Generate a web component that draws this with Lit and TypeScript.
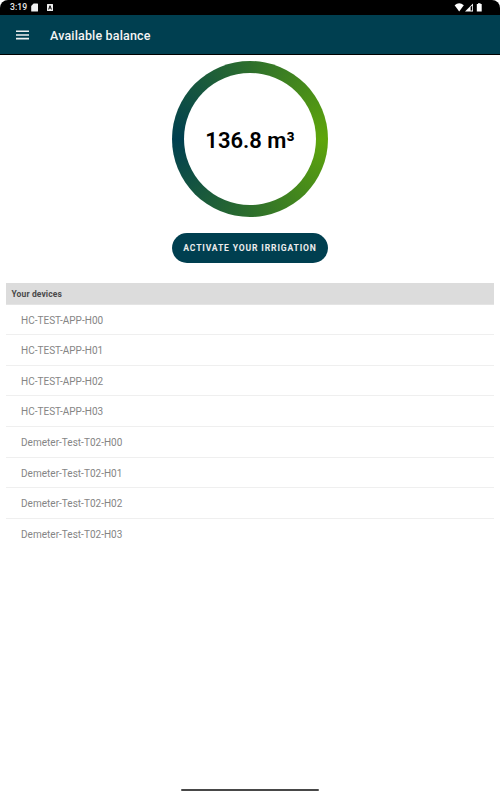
import { LitElement, html, css } from "lit";
import { customElement, property } from "lit/decorators.js";

@customElement("status-bar")
class StatusBar extends LitElement {
  static styles = css`
    :host { display: flex; box-sizing: border-box; height: 15px; flex: none; align-items: center;
      background: #000; color: #e8e8e8; border-radius: 8px 8px 0 0; padding: 0 17px 0 10px; }
    .time { font: 500 8.6px/15px Roboto, sans-serif; width: 21px; letter-spacing: 0.05px; }
    svg { display: block; fill: #f0f0f0; }
    .app { margin-left: 8px; }
    .right { margin-left: auto; fill: #fff; }
  `;
  render() {
    return html`
      <span class="time">3:19</span>
      <svg width="8" height="15" viewBox="0 0 8 15"><path d="M2.6 3.4H6.4Q7 3.4 7 4V10.9Q7 11.5 6.4 11.5H.8Q.2 11.5.2 10.9V6Z" /></svg>
      <svg class="app" width="7" height="15" viewBox="0 0 7 15"><path fill-rule="evenodd" d="M.5 4H5.5Q6 4 6 4.5V10.5Q6 11 5.5 11H.5Q0 11 0 10.5V4.5Q0 4 .5 4ZM2.5 5.4 1.2 9.4H2.1L2.4 8.5H3.7L4 9.4H4.9L3.5 5.4ZM3 6.4 3.4 7.8H2.7Z" /></svg>
      <svg class="right" width="29" height="15" viewBox="0 0 29 15">
        <path d="M.6 5.3Q5.2 1.3 9.8 5.3L5.2 11.4Z" />
        <path fill-rule="evenodd" d="M19 3.4V11.5H11ZM16.6 7V10.6H18.2V5.5Z" />
        <path d="M22.8 4.1H24V3.2H26.5V4.1H27.7V11.6H22.8Z" />
      </svg>
    `;
  }
}

@customElement("balance-ring")
class BalanceRing extends LitElement {
  @property() value = "";
  static styles = css`
    :host { display: grid; box-sizing: border-box; width: 156px; height: 156px; padding: 12px; border-radius: 50%;
      background: conic-gradient(from 270deg, #003f50, #2d6e2c 25%, #5ea50b 50%, #2d6e2c 75%, #003f50); }
    .inner { display: grid; place-items: center; box-sizing: border-box; padding-top: 3px; border-radius: 50%; background: #fff;
      font: 600 22px/26px Roboto, sans-serif; color: #000; white-space: nowrap; }
  `;
  render() {
    return html`<div class="inner">${this.value}</div>`;
  }
}

@customElement("device-list")
class DeviceList extends LitElement {
  @property({ attribute: false }) devices: string[] = [];
  static styles = css`
    :host { display: block; font-family: Roboto, sans-serif; }
    .title { box-sizing: border-box; height: 22px; background: #dcdcdc; color: #4a4a4a; padding-left: 5.5px;
      font-size: 8.5px; line-height: 23px; font-weight: 700; letter-spacing: 0.12px; border-bottom: 1px solid #e4e4e4; }
    .row { box-sizing: border-box; height: 30.67px; padding-left: 15px; color: #858585;
      font-size: 10px; line-height: 31px; letter-spacing: 0.02px; border-bottom: 1px solid #efefef; }
    .row:last-child { border-bottom: 0; }
  `;
  render() {
    return html`<div class="title">Your devices</div>
      ${this.devices.map((d) => html`<div class="row">${d}</div>`)}`;
  }
}

@customElement("app-root")
class AppRoot extends LitElement {
  private devices = ["HC-TEST-APP-H", "Demeter-Test-T02-H"].flatMap((prefix) =>
    ["00", "01", "02", "03"].map((n) => prefix + n)
  );
  static styles = css`
    :host { display: flex; flex-direction: column; height: 800px; overflow: hidden; background: #fff;
      font-family: Roboto, sans-serif; }
    .bar { box-sizing: border-box; height: 40px; flex: none; display: flex; align-items: center;
      background: #003f50; border-bottom: 1px solid #000; padding-left: 16px; color: #f4f4f4; }
    .menu { display: block; width: 13px; height: 10px; fill: #f0f0f0; }
    .heading { margin: 2px 0 0 21px; font-size: 12.5px; line-height: 16px; font-weight: 500; letter-spacing: 0.16px; }
    .main { flex: 1; display: flex; flex-direction: column; align-items: center; padding: 6px 6px 0; }
    .activate { box-sizing: border-box; width: 156px; height: 30px; margin-top: 15.5px; padding: 0; border: 0; border-radius: 15px;
      background: #003f50; color: #ececec; font: 700 8.6px/30px Roboto, sans-serif; letter-spacing: 0.84px; white-space: nowrap; }
    .list { align-self: stretch; margin-top: 20px; }
    .handle { flex: none; align-self: center; width: 138px; height: 2px; margin-bottom: 9px; border-radius: 1px; background: #484848; }
  `;
  render() {
    return html`
      <status-bar></status-bar>
      <header class="bar">
        <svg class="menu" viewBox="0 0 13 10"><path d="M0 .5H13V2H0ZM0 4.2H13V5.8H0ZM0 7.8H13V9.4H0Z" /></svg>
        <span class="heading">Available balance</span>
      </header>
      <main class="main">
        <balance-ring value="136.8 m³"></balance-ring>
        <button class="activate">ACTIVATE YOUR IRRIGATION</button>
        <device-list class="list" .devices=${this.devices}></device-list>
      </main>
      <div class="handle"></div>
    `;
  }
}
